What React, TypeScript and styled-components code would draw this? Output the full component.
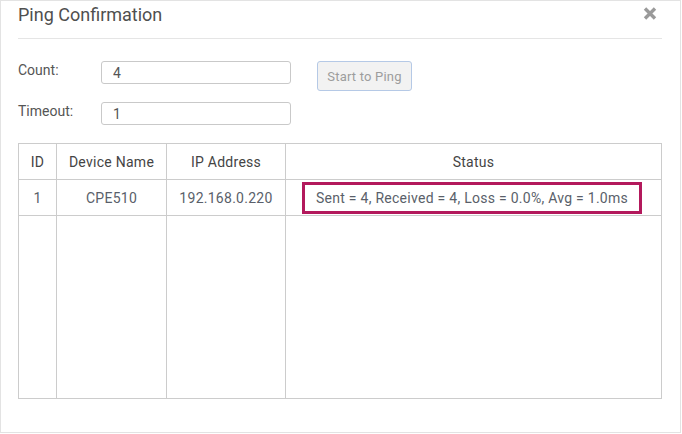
import React from 'react';
import styled, { createGlobalStyle } from 'styled-components';

const GlobalStyle = createGlobalStyle`
  html, body {
    margin: 0;
    padding: 0;
    background: #ffffff;
  }
  body {
    font-family: Roboto, "Liberation Sans", Arial, sans-serif;
  }
`;

interface PingRow {
  id: number,
  name: string,
  ip: string,
  status: string
}

const rows: PingRow[] = [
  { id: 1, name: "CPE510", ip: "192.168.0.220", status: "Sent = 4, Received = 4, Loss = 0.0%, Avg = 1.0ms" }
];

export default function App() {
  return <>
    <GlobalStyle />
    <Dialog>
      <Header>
        <Title>Ping Confirmation</Title>
        <CloseButton aria-label="close">
          <svg width="14" height="13" viewBox="0 0 14 13">
            <path d="M2 1.5 L12 11.5 M12 1.5 L2 11.5" stroke="#9a9a9a" strokeWidth="3.4" strokeLinecap="butt" fill="none" />
          </svg>
        </CloseButton>
      </Header>

      <Form>
        <Label>Count:</Label>
        <TextInput defaultValue="4" />
        <PingButton disabled>Start to Ping</PingButton>
        <Label>Timeout:</Label>
        <TextInput defaultValue="1" />
      </Form>

      <Table>
        <colgroup>
          <col style={{ width: 38 }} />
          <col style={{ width: 110 }} />
          <col style={{ width: 119 }} />
          <col />
        </colgroup>
        <thead>
          <tr>
            <Th>ID</Th>
            <Th>Device Name</Th>
            <Th>IP Address</Th>
            <Th>Status</Th>
          </tr>
        </thead>
        <tbody>
          {rows.map(r => (
            <tr key={r.id}>
              <Td>{r.id}</Td>
              <Td>{r.name}</Td>
              <Td>{r.ip}</Td>
              <Td><Highlight>{r.status}</Highlight></Td>
            </tr>
          ))}
          <FillerRow>
            <td /><td /><td /><td />
          </FillerRow>
        </tbody>
      </Table>
    </Dialog>
  </>
}

const Dialog = styled.div`
  box-sizing: border-box;
  width: 681px;
  height: 433px;
  border: 1px solid #e3e3e3;
  padding: 0 18px 0 17px;
  background: #fff;
`;

const Header = styled.div`
  display: flex;
  align-items: flex-start;
  justify-content: space-between;
  height: 37px;
  border-bottom: 1px solid #e5e5e5;
`;

const Title = styled.div`
  font-size: 18px;
  line-height: 22px;
  padding-top: 3px;
  color: #4f4f4f;
`;

const CloseButton = styled.div`
  display: flex;
  margin: 6px 5px 0 0;
  cursor: pointer;
`;

const Form = styled.div`
  display: grid;
  grid-template-columns: 83px 190px auto;
  grid-template-rows: 23px 23px;
  column-gap: 0;
  row-gap: 18px;
  justify-items: start;
  align-items: start;
  margin-top: 22px;
`;

const Label = styled.div`
  font-size: 14px;
  line-height: 18px;
  color: #555;
`;

const TextInput = styled.input`
  box-sizing: border-box;
  width: 190px;
  height: 23px;
  border: 1px solid #c9c9c9;
  border-radius: 3px;
  padding: 0 11px;
  font-family: Roboto, "Liberation Sans", Arial, sans-serif;
  font-size: 14px;
  color: #555;
  outline: none;
`;

const PingButton = styled.button`
  box-sizing: border-box;
  width: 95px;
  height: 30px;
  grid-column: 3;
  grid-row: 1;
  margin-left: 26px;
  background: #f2f2f2;
  border: 1px solid #b5c9e6;
  border-radius: 3px;
  color: #9d9d9d;
  font-family: Roboto, "Liberation Sans", Arial, sans-serif;
  font-size: 13px;
  letter-spacing: 0.2px;
  padding: 0;
`;

const Table = styled.table`
  width: 644px;
  margin-top: 18px;
  border-collapse: collapse;
  table-layout: fixed;
  font-size: 14px;
  letter-spacing: 0.27px;
`;

const Th = styled.th`
  height: 35px;
  padding: 0;
  border: 1px solid #cccccc;
  font-weight: normal;
  color: #444;
  text-align: center;
`;

const Td = styled.td`
  height: 35px;
  padding: 0;
  border: 1px solid #cccccc;
  color: #5a5f6a;
  text-align: center;
`;

const FillerRow = styled.tr`
  height: 183px;
  td {
    border: 1px solid #cccccc;
  }
`;

const Highlight = styled.span`
  display: inline-flex;
  align-items: center;
  box-sizing: border-box;
  height: 32px;
  padding: 0 11px;
  border: 3px solid #b3195c;
  margin-right: 3px;
  vertical-align: middle;
`;
